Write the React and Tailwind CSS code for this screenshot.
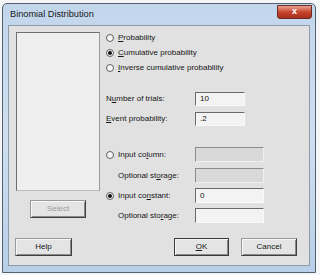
import React from 'react'

const font = "font-['Liberation_Sans',Arial,sans-serif]"

function Radio({ checked, children }) {
  return (
    <div className="flex items-center h-[15px]">
      <span className="w-[8px] h-[8px] rounded-full border border-[#5e5e5e] bg-[#f7f7f7] flex items-center justify-center shrink-0">
        {checked && <span className="w-[4px] h-[4px] rounded-full bg-[#111]" />}
      </span>
      <span className="ml-[4px] text-[8px] leading-none text-[#161616]">{children}</span>
    </div>
  )
}

function Field({ wide, disabled, value }) {
  const width = wide ? 'w-[69px]' : 'w-[50px]'
  const tone = disabled
    ? 'bg-[#d9d9d9] border-t-[#8c8c8c] border-l-[#8c8c8c] border-r-[#f0f0f0] border-b-[#f0f0f0]'
    : 'bg-[#f3f3f3] border-t-[#6a6a6a] border-l-[#6a6a6a] border-r-[#fafafa] border-b-[#fafafa]'
  return (
    <div className={`${width} h-full border-[1.5px] ${tone} flex items-center pl-[4px] text-[8px] leading-none text-[#111]`}>
      {value}
    </div>
  )
}

function Btn({ children, disabled, primary, className = '' }) {
  return (
    <div
      className={`h-[18px] flex items-center justify-center text-[8px] leading-none bg-[#e4e4e4] border ${
        primary ? 'border-[#3a3a3a]' : 'border-t-[#9a9a9a] border-l-[#9a9a9a] border-r-[#3f3f3f] border-b-[#3f3f3f]'
      } shadow-[inset_1px_1px_0_#f6f6f6,inset_-1px_-1px_0_#8a8a8a] ${disabled ? 'text-[#9a9a9a]' : 'text-[#161616]'} ${className}`}
    >
      {children}
    </div>
  )
}

export default function App() {
  return (
    <div className={`w-[320px] h-[275px] bg-[#f4f6f8] overflow-hidden ${font}`}>
      {/* window frame */}
      <div className="ml-[2px] mt-[3px] w-[314px] h-[270px] rounded-t-[5px] border border-[#55606e] bg-gradient-to-b from-[#c2d6ec] via-[#cfdff0] to-[#b8cfe8] flex flex-col px-[5px] pb-[6px]">
        {/* title bar */}
        <div className="h-[21px] flex items-center shrink-0">
          <span className="ml-[2px] text-[9.2px] leading-none text-[#1a1a1a]">Binomial Distribution</span>
          <div className="ml-auto -mr-[2px] mb-[6px] w-[35px] h-[14px] rounded-b-[3px] border border-[#6b2a22] bg-gradient-to-b from-[#e8a08f] via-[#c8452f] to-[#a92c1c] flex items-center justify-center">
            <span className="text-[9px] font-bold leading-none text-white">x</span>
          </div>
        </div>

        {/* dialog body */}
        <div className="flex-1 bg-[#e1e1e1] border border-[#8f9aa8] flex flex-col pt-[4px]">
          <div className="flex h-[194px]">
            {/* variable list */}
            <div className="ml-[7px] w-[84px] flex flex-col">
              <div className="mt-[2px] h-[159px] bg-[#efefef] border-[1.5px] border-t-[#6f6f6f] border-l-[#6f6f6f] border-r-[#9a9a9a] border-b-[#bdbdbd]" />
              <Btn disabled className="mt-[9px] mx-auto w-[56px]">Select</Btn>
            </div>

            {/* options */}
            <div className="ml-[6px] flex flex-col">
              <Radio><u>P</u>robability</Radio>
              <Radio checked><u>C</u>umulative probability</Radio>
              <Radio><u>I</u>nverse cumulative probability</Radio>

              <div className="mt-[17px] h-[14px] flex items-center">
                <span className="w-[89px] text-[8px] leading-none text-[#161616]">N<u>u</u>mber of trials:</span>
                <Field value="10" />
              </div>
              <div className="mt-[6px] h-[14px] flex items-center">
                <span className="w-[89px] text-[8px] leading-none text-[#161616]"><u>E</u>vent probability:</span>
                <Field value=".2" />
              </div>

              <div className="mt-[21px] h-[15px] flex items-center">
                <div className="w-[89px]"><Radio>Input co<u>l</u>umn:</Radio></div>
                <Field wide disabled />
              </div>
              <div className="mt-[6px] h-[15px] flex items-center">
                <span className="w-[89px] pl-[12px] text-[8px] leading-none text-[#161616]">Optional st<u>o</u>rage:</span>
                <Field wide disabled />
              </div>
              <div className="mt-[5px] h-[15px] flex items-center">
                <div className="w-[89px]"><Radio checked>Input co<u>n</u>stant:</Radio></div>
                <Field wide value="0" />
              </div>
              <div className="mt-[5px] h-[15px] flex items-center">
                <span className="w-[89px] pl-[12px] text-[8px] leading-none text-[#161616]">Optional sto<u>r</u>age:</span>
                <Field wide />
              </div>
            </div>
          </div>

          {/* bottom buttons */}
          <div className="mt-[14px] flex items-center pl-[6px] pr-[12px]">
            <Btn className="w-[57px]">Help</Btn>
            <Btn primary className="ml-auto w-[55px]"><u>O</u>K</Btn>
            <Btn className="ml-[12px] w-[56px]">Cancel</Btn>
          </div>
        </div>
      </div>
    </div>
  )
}
